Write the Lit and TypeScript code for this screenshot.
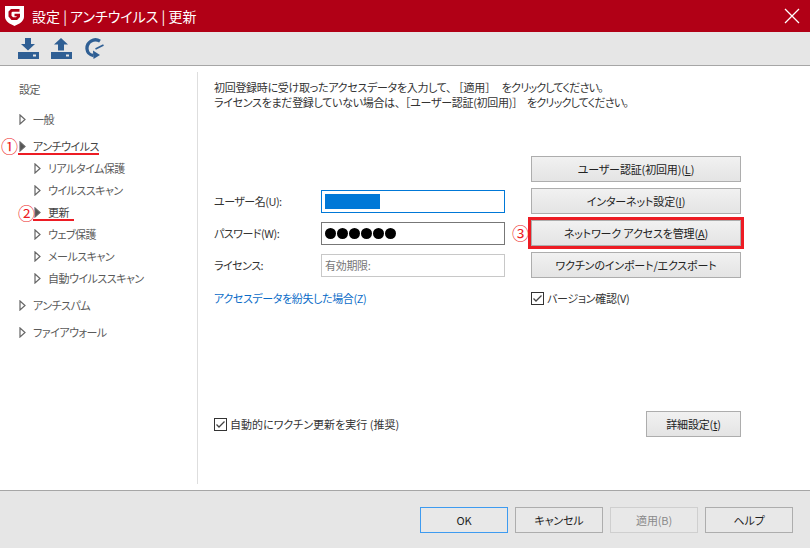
import { LitElement, html, css } from "lit";
import { customElement } from "lit/decorators.js";

const arrow = (filled = false) => html`<svg class="arrow" width="7" height="11" viewBox="0 0 7 11"><path d="M1 1 L6 5.5 L1 10 Z" fill=${filled ? "#555" : "#fff"} stroke="#666" stroke-width="1.2"/></svg>`;

const check = html`<svg class="check" width="13" height="13" viewBox="0 0 13 13"><rect x=".5" y=".5" width="12" height="12" fill="#fff" stroke="#333"/><path d="M2.500 6.500 L5 9 L10.500 3.500" fill="none" stroke="#444" stroke-width="1.3"/></svg>`;

@customElement("app-root")
export class AppRoot extends LitElement {
  static styles = css`
    :host { display: block; width: 810px; height: 548px; overflow: hidden; background: #fff; color: #222;
      font: 11px/15px "Noto Sans CJK JP", "Noto Sans", sans-serif; font-feature-settings: "palt"; letter-spacing: -0.3px; }
    * { box-sizing: border-box; }
    .win { display: flex; flex-direction: column; height: 548px; }
    .title { height: 32px; flex: none; background: #b10016; color: #fff; display: flex; align-items: center; padding: 0 10px 0 5px; font-size: 14px; letter-spacing: 0; gap: 8px; }
    .title .close { margin-left: auto; display: block; }
    .title svg { display: block; }
    .tools { height: 34px; flex: none; background: #e6e6e6; border-bottom: 1px solid #a6a6a6; display: flex; align-items: center; padding-left: 17px; gap: 10px; }
    .tools svg { display: block; }
    .tools .back { margin-left: 1px; }
    .body { flex: 1; display: flex; min-height: 0; }
    .side { width: 198px; flex: none; margin: 6px 0 6px; padding-top: 6px; border-right: 1px solid #dedede; color: #5a5a5a; display: flex; flex-direction: column; gap: 5px; letter-spacing: -0.5px; }
    .row { height: 22px; display: flex; align-items: center; padding-left: 19px; position: relative; }
    .row .arrow { flex: none; margin-right: 7px; }
    .row.sub { padding-left: 34px; }
    .row.head { margin-bottom: 3px; }
    .row.on { color: #444; }
    .bar { position: absolute; height: 2px; background: #ed1c24; bottom: 2px; }
    .mark { position: absolute; color: #ed1c24; font-size: 17px; line-height: 16px; letter-spacing: 0; font-feature-settings: normal; }
    .main { flex: 1; padding: 14px 0 0 16px; display: flex; flex-direction: column; }
    .intro { margin: 0; color: #333; }
    .br { font-feature-settings: normal; }
    .open { margin-left: 7px; }
    .shut { margin-right: 4px; }
    .open.two { margin-left: 5px; }
    .shut.two { margin-right: 2px; }
    .tail { letter-spacing: -0.8px; }
    .form { display: flex; margin-top: 46px; }
    .fields { width: 317px; flex: none; padding-top: 34px; display: flex; flex-direction: column; gap: 9px; }
    .field { display: flex; align-items: center; height: 23px; }
    .field label { width: 107px; flex: none; color: #333; letter-spacing: -0.5px; }
    .input { width: 184px; height: 23px; border: 1px solid #777; background: #fff; display: flex; align-items: center; padding-left: 3px; }
    .input.focus { border-color: #0078d7; }
    .sel { display: block; width: 55px; height: 15px; background: #0078d7; }
    .dots { display: flex; gap: 1px; }
    .dot { width: 11px; height: 11px; border-radius: 50%; background: #000; }
    .input.ro { border-color: #c8c8c8; color: #777; }
    .link { color: #0a6cc8; margin-top: 1px; height: 23px; display: flex; align-items: center; letter-spacing: -0.37px; }
    .btns { width: 210px; flex: none; display: flex; flex-direction: column; gap: 6px; }
    .btn { height: 26px; border: 1px solid #adadad; background: linear-gradient(#f1f1f1, #e4e4e4); display: flex; align-items: center; justify-content: center; color: #222; position: relative; letter-spacing: -0.15px; }
    .btn u { text-underline-offset: 1px; }
    .btn.hl { outline: 3px solid #ed1c24; }
    .btn.hl .mark { left: -20px; top: 4px; }
    .chk { display: flex; align-items: center; gap: 3px; color: #333; }
    .check { flex: none; display: block; }
    .ver { margin-top: 8px; height: 13px; }
    .bottom { margin-top: auto; display: flex; align-items: center; justify-content: space-between; width: 527px; margin-bottom: 53px; }
    .bottom .chk { letter-spacing: 0; }
    .wide { width: 95px; }
    .foot { height: 58px; flex: none; background: #e6e6e6; border-top: 1px solid #a6a6a6; display: flex; justify-content: flex-end; gap: 7px; padding: 16px 17px 0 0; }
    .foot .btn { width: 88px; background: #e8e8e8; }
    .foot .ok { border-color: #3e9bf0; }
    .foot .off { border-color: #cfcfcf; color: #8a8a8a; }
  `;

  render() {
    return html`<div class="win">
      <div class="title">
        <svg width="19" height="20" viewBox="0 0 19 20">
          <path d="M0 0 H19 V11 C19 15.500 13 18.500 9.500 20 C6 18.500 0 15.500 0 11 Z" fill="#fff"/>
          <path d="M14.500 3 H6 L3.500 5.500 V10.500 L6.500 14 H12 L15 11 V7.800 H9.500 V10.300 H12 L11 11.300 H8 L6.500 9.800 V6.500 L7.500 5.700 H14.500 Z" fill="#b10016"/>
        </svg>
        <span>設定 | アンチウイルス | 更新</span>
        <svg class="close" width="16" height="16" viewBox="0 0 16 16"><path d="M1 1 L15 15 M15 1 L1 15" stroke="#fff" stroke-width="1.3"/></svg>
      </div>
      <div class="tools">
        <svg width="23" height="23" viewBox="0 0 23 23" fill="#2f5f94">
          <path d="M8 1 H14 V7 H18 L11 13.500 L4 7 H8 Z"/>
          <path d="M1 15 H22 V22 H1 Z M16 17.500 V19.500 H19 V17.500 Z" fill-rule="evenodd"/>
        </svg>
        <svg width="23" height="23" viewBox="0 0 23 23" fill="#2f5f94">
          <path d="M8 13.500 H14 V7.500 H18 L11 1 L4 7.500 H8 Z"/>
          <path d="M1 15 H22 V22 H1 Z M16 17.500 V19.500 H19 V17.500 Z" fill-rule="evenodd"/>
        </svg>
        <svg class="back" width="21" height="23" viewBox="0 0 21 23">
          <path d="M16 4.200 C10 0.500 2.500 5 3 12 C3.300 15.500 6 18 9.500 18.500" fill="none" stroke="#2f5f94" stroke-width="3.300"/>
          <path d="M19.500 8 L11.500 12" stroke="#2f5f94" stroke-width="1.600"/>
          <path d="M9 13.500 L16 18 L9.500 22 Z" fill="#2f5f94"/>
        </svg>
      </div>
      <div class="body">
        <nav class="side">
          <div class="group"><div class="row head">設定</div></div>
          <div class="group"><div class="row">${arrow()}<span>一般</span></div></div>
          <div class="group">
            <div class="row on">${arrow(true)}<span>アンチウイルス</span><i class="bar" style="left:18px;width:81px"></i><span class="mark" style="left:1px;top:3px">①</span></div>
            <div class="row sub">${arrow()}<span>リアルタイム保護</span></div>
            <div class="row sub">${arrow()}<span>ウイルススキャン</span></div>
            <div class="row sub on">${arrow(true)}<span>更新</span><i class="bar" style="left:33px;width:41px"></i><span class="mark" style="left:18px;top:4px">②</span></div>
            <div class="row sub">${arrow()}<span>ウェブ保護</span></div>
            <div class="row sub">${arrow()}<span>メールスキャン</span></div>
            <div class="row sub">${arrow()}<span>自動ウイルススキャン</span></div>
          </div>
          <div class="group"><div class="row">${arrow()}<span>アンチスパム</span></div></div>
          <div class="group"><div class="row">${arrow()}<span>ファイアウォール</span></div></div>
        </nav>
        <main class="main">
          <p class="intro">初回登録時に受け取ったアクセスデータを入力して、<span class="br open">［</span>適用<span class="br shut">］</span> <span class="tail">をクリックしてください。</span><br>ライセンスをまだ登録していない場合は、<span class="br open two">［</span>ユーザー認証(初回用)<span class="br shut two">］</span> <span class="tail">をクリックしてください。</span></p>
          <div class="form">
            <div class="fields">
              <div class="field"><label>ユーザー名(U):</label><div class="input focus"><span class="sel"></span></div></div>
              <div class="field"><label>パスワード(W):</label><div class="input"><span class="dots"><i class="dot"></i><i class="dot"></i><i class="dot"></i><i class="dot"></i><i class="dot"></i><i class="dot"></i></span></div></div>
              <div class="field"><label>ライセンス:</label><div class="input ro">有効期限:</div></div>
              <div class="link">アクセスデータを紛失した場合(Z)</div>
            </div>
            <div class="btns">
              <div class="btn">ユーザー認証(初回用)(<u>L</u>)</div>
              <div class="btn">インターネット設定(<u>I</u>)</div>
              <div class="btn hl">ネットワーク アクセスを管理(<u>A</u>)<span class="mark">③</span></div>
              <div class="btn">ワクチンのインポート/エクスポート</div>
              <div class="chk ver">${check}<span>バージョン確認(V)</span></div>
            </div>
          </div>
          <div class="bottom">
            <div class="chk">${check}<span>自動的にワクチン更新を実行 (推奨)</span></div>
            <div class="btn wide">詳細設定(<u>t</u>)</div>
          </div>
        </main>
      </div>
      <div class="foot">
        <div class="btn ok">OK</div>
        <div class="btn">キャンセル</div>
        <div class="btn off">適用(B)</div>
        <div class="btn">ヘルプ</div>
      </div>
    </div>`;
  }
}
